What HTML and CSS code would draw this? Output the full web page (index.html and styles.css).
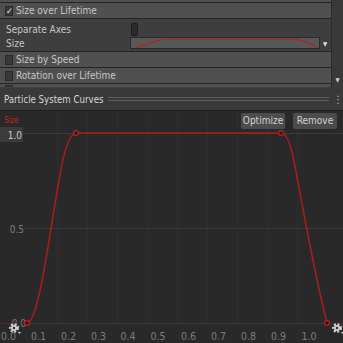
FILE: index.html
```html
<!DOCTYPE html>
<html lang="en">
<head>
    <meta charset="UTF-8">
    <title>Particle System Curves</title>
    <link rel="stylesheet" href="styles.css">
</head>
<body>
    <div class="inspector">
        <div class="modules">
            <div class="module-head stub"></div>
            <div class="module-head"><span class="toggle">&#10003;</span>Size over Lifetime</div>
            <div class="module-body">
                <div class="field">
                    <span class="label">Separate Axes</span>
                    <span class="checkbox"></span>
                </div>
                <div class="field">
                    <span class="label">Size</span>
                    <span class="curve-field">
                        <svg width="190" height="12" viewBox="0 0 190 12">
                            <path d="M0 12 C12 8, 25 1, 36 1 L163 1 C172 1, 182 6, 189 10" fill="none" stroke="#b52222" stroke-width="1.2"/>
                        </svg>
                    </span>
                    <span class="drop">&#9660;</span>
                </div>
            </div>
            <div class="module-head"><span class="toggle"></span>Size by Speed</div>
            <div class="module-head"><span class="toggle"></span>Rotation over Lifetime</div>
            <div class="module-head cut"><span class="toggle"></span></div>
        </div>
        <div class="scrollbar"><span class="arrow">&#9660;</span></div>
    </div>

    <div class="window-title">
        <span class="title-text">Particle System Curves</span>
        <span class="rule"></span>
        <span class="menu">&#8942;</span>
    </div>

    <div class="graph">
        <div class="graph-bar">
            <span class="curve-name">Size</span>
            <div class="actions">
                <button class="btn">Optimize</button>
                <button class="btn">Remove</button>
            </div>
        </div>
        <svg class="plot" width="343" height="232" viewBox="0 0 343 232">
            <!-- vertical grid -->
            <g stroke="#2e2e2e" stroke-width="1">
                <line x1="57.5" y1="0" x2="57.5" y2="212"/>
                <line x1="87.5" y1="0" x2="87.5" y2="212"/>
                <line x1="117.5" y1="0" x2="117.5" y2="212"/>
                <line x1="147.5" y1="0" x2="147.5" y2="212"/>
                <line x1="177.5" y1="0" x2="177.5" y2="212"/>
                <line x1="207.5" y1="0" x2="207.5" y2="212"/>
                <line x1="237.5" y1="0" x2="237.5" y2="212"/>
                <line x1="267.5" y1="0" x2="267.5" y2="212"/>
                <line x1="297.5" y1="0" x2="297.5" y2="212"/>
            </g>
            <!-- value lines -->
            <g stroke="#3a3a3a" stroke-width="1">
                <line x1="23" y1="22.5" x2="343" y2="22.5"/>
                <line x1="24" y1="117.5" x2="343" y2="117.5"/>
                <line x1="0" y1="212.5" x2="343" y2="212.5"/>
            </g>

            <!-- y labels -->
            <rect x="0" y="16" width="23" height="15" fill="#3b3b3b"/>
            <text class="ylabel hi" x="22" y="28">1.0</text>
            <text class="ylabel" x="24" y="122">0.5</text>
            <text class="ylabel" x="26" y="216">0.0</text>

            <!-- wrap lines -->
            <line x1="0" y1="212" x2="27" y2="212" stroke="#4a2020" stroke-width="1"/>
            <line x1="327" y1="212" x2="343" y2="212" stroke="#4a2020" stroke-width="1"/>

            <!-- curve -->
            <path d="M27 212 C40 212, 52 100, 63 48 C67 32, 71 22, 76 22 L281 22 C286 22, 290 30, 294 50 C305 110, 316 170, 327 212"
                  fill="none" stroke="#a81e1e" stroke-width="1.5"/>
            <g fill="#2a0c0c" stroke="#b82424" stroke-width="1.2">
                <circle cx="27" cy="212" r="2.4"/>
                <circle cx="76" cy="22" r="2.4"/>
                <circle cx="281" cy="22" r="2.4"/>
                <circle cx="327" cy="212" r="2.4"/>
            </g>

            <!-- x labels -->
            <g class="xlabels">
                <text x="8.5" y="229">0.0</text>
                <text x="38.5" y="229">0.1</text>
                <text x="68.5" y="229">0.2</text>
                <text x="98.5" y="229">0.3</text>
                <text x="128" y="229">0.4</text>
                <text x="158" y="229">0.5</text>
                <text x="188.5" y="229">0.6</text>
                <text x="218.5" y="229">0.7</text>
                <text x="248.5" y="229">0.8</text>
                <text x="278.5" y="229">0.9</text>
                <text x="309" y="229">1.0</text>
            </g>

            <!-- gear buttons -->
            <g class="gear" transform="translate(14 217)">
                <circle r="3.6" fill="none" stroke="#d0d0d0" stroke-width="2.6" stroke-dasharray="1.9 1.5"/>
                <circle r="3" fill="#d0d0d0"/>
                <circle r="1.2" fill="#292929"/>
                <path d="M4 4 L7 4 L5.5 6 Z" fill="#d0d0d0"/>
            </g>
            <g class="gear" transform="translate(337 217)">
                <circle r="3.6" fill="none" stroke="#d0d0d0" stroke-width="2.6" stroke-dasharray="1.9 1.5"/>
                <circle r="3" fill="#d0d0d0"/>
                <circle r="1.2" fill="#292929"/>
                <path d="M4 4 L7 4 L5.5 6 Z" fill="#d0d0d0"/>
            </g>
        </svg>
    </div>
</body>
</html>
```

FILE: styles.css
```css
body { margin: 0; width: 343px; height: 343px; overflow: hidden; background: #292929; font-family: "DejaVu Sans Condensed", "Liberation Sans", sans-serif; color: #c6c6c6; }

.inspector { display: flex; height: 88px; background: #3e3e3e; }
.modules { width: 331px; display: flex; flex-direction: column; }
.scrollbar { flex: 1; background: #393939; border-left: 1px solid #2c2c2c; display: flex; align-items: flex-end; justify-content: center; }
.scrollbar .arrow { font-size: 6px; color: #d0d0d0; margin-bottom: 5px; }

.module-head { height: 15px; border-bottom: 1px solid #242424; background: #505050; display: flex; align-items: center; font-size: 10px; }
.module-head.stub { height: 2px; }
.module-head.cut { height: 3px; border-bottom: none; align-items: flex-start; overflow: hidden; }
.toggle { width: 8px; height: 10px; margin: 0 3px 0 5px; background: #393939; border: 1px solid #2a2a2a; box-sizing: border-box; font-size: 9px; line-height: 9px; color: #e6e6e6; text-align: center; }
.module-head.cut .toggle { margin-top: 1px; }

.module-body { height: 33px; border-bottom: 1px solid #242424; padding: 3px 0 0 6px; box-sizing: border-box; }
.field { display: flex; align-items: center; height: 14px; font-size: 10px; }
.label { width: 124px; }
.checkbox { width: 7px; height: 13px; background: #2c2c2c; border: 1px solid #1f1f1f; box-sizing: border-box; border-radius: 1px; margin-left: 1px; }
.curve-field { width: 190px; height: 12px; background: #585858; border: 1px solid #2a2a2a; box-sizing: border-box; display: flex; overflow: hidden; }
.curve-field svg { display: block; }
.drop { font-size: 6px; color: #e0e0e0; margin-left: 3px; }

.window-title { height: 22px; border-bottom: 1px solid #1f1f1f; background: #393939; display: flex; align-items: center; padding-left: 4px; }
.title-text { font-size: 9.6px; color: #d6d6d6; }
.rule { flex: 1; height: 2px; border-top: 1px solid #5e5e5e; border-bottom: 1px solid #5e5e5e; margin: 0 4px 0 5px; }
.menu { font-size: 10px; color: #c8c8c8; width: 10px; text-align: center; }

.graph { position: relative; height: 232px; }
.plot { display: block; }
.graph-bar { position: absolute; top: 2px; left: 4px; right: 6px; display: flex; justify-content: space-between; align-items: flex-start; }
.curve-name { font-size: 8px; color: #c42222; margin-top: 3px; }
.actions { display: flex; gap: 8px; }
.btn { height: 16px; width: 44px; padding: 0; background: #4c4c4c; border: none; border-radius: 2px; color: #d2d2d2; font-family: inherit; font-size: 10px; line-height: 16px; }

.ylabel { font-size: 10px; fill: #7c7c7c; text-anchor: end; }
.ylabel.hi { fill: #c8c8c8; }
.xlabels text { font-size: 10.5px; fill: #7c7c7c; text-anchor: middle; }
```
